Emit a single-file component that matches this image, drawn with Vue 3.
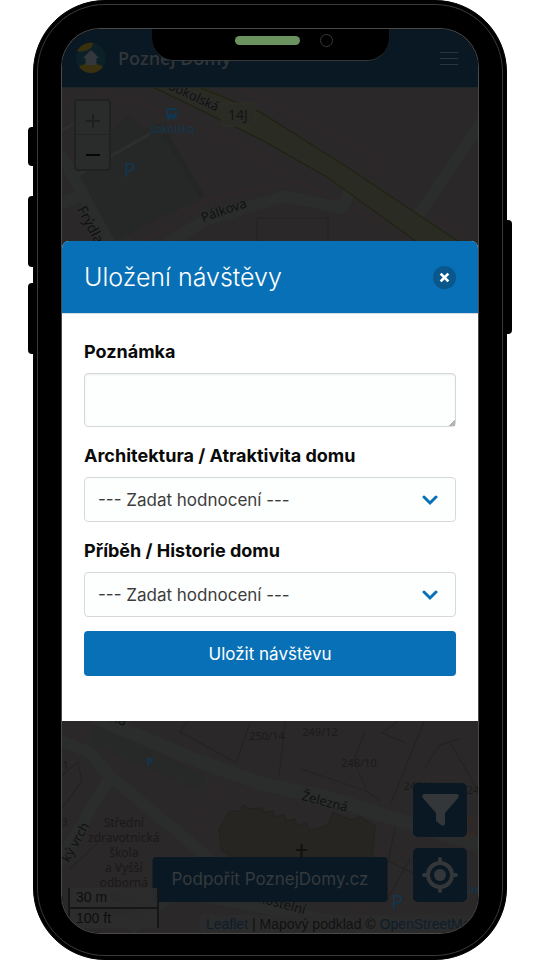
<template>
  <div class="stage">
    <div class="phone">
      <span class="side-key mute"></span>
      <span class="side-key volume-up"></span>
      <span class="side-key volume-down"></span>
      <span class="side-key power"></span>

      <div class="screen">
        <div class="app">
          <header class="app-header">
            <svg class="logo" viewBox="0 0 32 32" aria-hidden="true">
              <circle cx="16" cy="16" r="15" fill="#0c2027" />
              <path d="M2 9C6 2 13 0 18 1C18 7 10 11 2 9Z" fill="#39300f" />
              <path d="M4 25C9 20 22 20 28 25C22 33 10 33 4 25Z" fill="#39300f" />
              <path d="M16 8L24 16H21.500V23H10.500V16H8Z" fill="#34373b" />
            </svg>
            <span class="brand">Poznej Domy</span>
            <button class="menu-btn" type="button" aria-label="Menu">
              <span></span>
              <span></span>
              <span></span>
            </button>
          </header>

          <main class="map">
            <svg class="map-canvas" viewBox="62 88 416 844" preserveAspectRatio="xMidYMid slice" aria-hidden="true">
              <rect x="0" y="0" width="600" height="1000" fill="#2a2828" />

              <!-- parking and side streets -->
              <path d="M74 180L95 143L130 115L142 128L165 122L172 140L204 197L150 222L115 242L100 232Z" fill="#262828" />
              <path d="M62 130L74 124M72 178L150 134" class="lane" />
              <path d="M165 134L202 196" class="verge" />
              <path d="M60 152L110 244M60 205L80 195" class="road" />
              <path d="M160 248L205 220L262 203L285 196L342 208L350 190" class="road" />
              <path d="M417 217L484 118" class="road" />
              <path d="M257 240V218H328V240" class="plot" />

              <!-- Sokolská -->
              <path d="M153 86L200 86L260 112L347 167L462 244H420L327 177L260 139Z" fill="#2a2b22" />
              <path d="M196 86L260 112L347 167L462 244M153 87L260 139L327 177L420 244" class="main-edge" />

              <g class="footway">
                <path d="M93 88L150 107L200 127L270 162L329 198M350 205L405 238" />
                <path d="M238 86L300 117L385 158L372 178M146 240L200 203L240 191L300 181" />
                <path d="M432 212L465 240M219 778L193 842M389 823L380 857M366 898L360 914" />
              </g>

              <!-- plots in the lower part -->
              <path d="M62 775L78 761L82 780L68 800L62 806M70 868L98 842M188 720L180 731L236 762L250 722M286 716L279 775M365 730L354 760L366 788M401 718L382 732L405 742M300 768L366 790L380 800" class="plot" />
              <path d="M391 802L410 755L425 718M425 766L440 744L460 738M450 742L478 790M396 822L388 860L420 876M386 900L410 858" class="plot" />
              <path d="M95 725L205 775L207 793L90 742Z" fill="#272929" />

              <path d="M95 716L190 757L262 783L330 797L407 822L484 846" class="road wide" />
              <path d="M60 739L90 752L111 776L210 858" class="road" />
              <path d="M109 778L58 864" class="road" />
              <path d="M130 930L175 890L260 906L330 920L484 930" class="road" />

              <path
                d="M222 850L219 828L229 811L240 810L243 804L251 808L262 807L264 812L273 810L275 816L284 814L286 820L295 818L297 825L306 822L309 829L318 827L327 825L333 812L352 819L360 816L375 825L372 857L238 860L226 852Z"
                fill="#272521"
                stroke="#23221f"
              />

              <g class="street">
                <text x="168" y="89" class="tight" transform="rotate(25 168 89)">Sokolská</text>
                <text x="203" y="222" transform="rotate(-19 203 222)" class="tight">Pálkova</text>
                <text x="77" y="209" transform="rotate(62 77 209)">Frýdlantská</text>
                <text x="301" y="799" class="tight" transform="rotate(15 301 799)">Železná</text>
                <text x="69" y="862" class="tight" transform="rotate(-61 69 862)">ký vrch</text>
                <text x="258" y="901" class="tight" transform="rotate(15 258 901)">kostelní</text>
                <text x="96" y="715" transform="rotate(20 96 715)">ezná</text>
              </g>

              <rect x="222" y="103" width="33" height="23" rx="2" fill="#2a2b25" stroke="#303029" />
              <text x="238" y="120" class="road-no">14J</text>

              <g fill="#12364f">
                <path d="M168 108H176Q177 108 177 110V118H175V120H173V118H170V120H168V118H166V110Q166 108 168 108ZM168 110V114H175V110Z" fill-rule="evenodd" />
                <text x="172" y="133" class="stop">Sokolská</text>
                <text x="130" y="177" class="parking">P</text>
                <text x="150" y="765" class="parking small">P</text>
                <text x="397" y="908" class="parking">P</text>
                <text x="472" y="892" class="stop">rak</text>
              </g>
              <g fill="#3a2a1c">
                <text x="470" y="822" class="stop">al</text>
                <text x="470" y="835" class="stop">ja</text>
              </g>

              <g class="house-no">
                <text x="267" y="739">250/14</text>
                <text x="320" y="735">249/12</text>
                <text x="359" y="766">248/10</text>
                <text x="418" y="789">245/4</text>
                <text x="476" y="793">244</text>
                <text x="66" y="768">1</text>
                <text x="65" y="825">3</text>
              </g>

              <g class="school">
                <text x="124" y="826">Střední</text>
                <text x="124" y="841">zdravotnická</text>
                <text x="124" y="856">škola</text>
                <text x="124" y="871">a Vyšší</text>
                <text x="124" y="886">odborná</text>
                <text x="124" y="901">škola</text>
                <text x="124" y="916">zdravotnická</text>
              </g>

              <path d="M301.500 843V857M296 849H307" stroke="#111" stroke-width="2" />
            </svg>

            <div class="zoom-control">
              <button type="button" aria-label="Přiblížit" class="zoom-in"></button>
              <button type="button" aria-label="Oddálit" class="zoom-out"></button>
            </div>

            <div class="map-tools">
              <button type="button" aria-label="Filtr">
                <svg viewBox="0 0 54 54" aria-hidden="true">
                  <path d="M11 11H44Q47 12 45 15L32 30V41Q31 44 28 42L23 38V30L10 15Q8 12 11 11Z" fill="#343739" />
                </svg>
              </button>
              <button type="button" aria-label="Moje poloha">
                <svg viewBox="0 0 54 54" fill="none" stroke="#343739" aria-hidden="true">
                  <circle cx="27" cy="27" r="12" stroke-width="4" />
                  <circle cx="27" cy="27" r="6" fill="#343739" stroke="none" />
                  <path d="M27 11V15M27 39V43M11 27H15M39 27H43" stroke-width="4" stroke-linecap="round" />
                </svg>
              </button>
            </div>

            <a class="donate" href="#">Podpořit PoznejDomy.cz</a>

            <div class="scale">
              <span>30 m</span>
              <span>100 ft</span>
            </div>

            <div class="attribution">
              <a href="#">Leaflet</a> | Mapový podklad © <a href="#">OpenStreetMap</a>
            </div>
          </main>
        </div>

        <section class="modal" role="dialog" aria-labelledby="modal-title">
          <div class="modal-header">
            <h1 id="modal-title">Uložení návštěvy</h1>
            <button class="close-btn" type="button" aria-label="Zavřít">
              <svg viewBox="0 0 10 10" aria-hidden="true">
                <path d="M1.500 1.500L8.500 8.500M8.500 1.500L1.500 8.500" stroke="#fff" stroke-width="2.500" />
              </svg>
            </button>
          </div>
          <form class="modal-body" @submit.prevent>
            <div class="field">
              <label for="note">Poznámka</label>
              <textarea id="note" v-model="note"></textarea>
            </div>
            <div v-for="item in ratings" :key="item.id" class="field">
              <label :for="item.id">{{ item.label }}</label>
              <div class="select-wrap">
                <select :id="item.id" v-model="item.value">
                  <option value="">--- Zadat hodnocení ---</option>
                  <option v-for="n in 5" :key="n" :value="n">{{ n }}</option>
                </select>
                <svg class="chevron" viewBox="0 0 16 12" aria-hidden="true">
                  <path d="M2 3L8 9L14 3" fill="none" stroke="#0870b6" stroke-width="3" stroke-linecap="round" />
                </svg>
              </div>
            </div>
            <button class="submit-btn" type="submit">Uložit návštěvu</button>
          </form>
        </section>

        <div class="notch">
          <span class="speaker"></span>
          <span class="camera"></span>
        </div>
      </div>
    </div>
  </div>
</template>

<script setup>
import { reactive, ref } from 'vue'

const note = ref('')

const ratings = reactive([
  { id: 'architecture', label: 'Architektura / Atraktivita domu', value: '' },
  { id: 'story', label: 'Příběh / Historie domu', value: '' },
])
</script>

<style>
body {
  background: #fff;
}
</style>

<style scoped>
.stage {
  min-height: 100vh;
  display: flex;
  padding: 0 33px;
  box-sizing: border-box;
  font-family: Inter, "Liberation Sans", sans-serif;
}

button,
select,
textarea {
  font: inherit;
}

.phone {
  position: relative;
  flex: 1;
  display: flex;
  min-width: 0;
  padding: 28px 28px 26px;
  border: 1px solid #000;
  border-radius: 72px;
  background: #000;
}

.phone::before {
  content: "";
  position: absolute;
  inset: 3px;
  border: 1px solid #3a3a3a;
  border-radius: 68px;
}

.side-key {
  position: absolute;
  left: -6px;
  width: 6px;
  background: #000;
  border-radius: 4px 0 0 4px;
}

.mute {
  top: 126px;
  height: 39px;
}

.volume-up {
  top: 195px;
  height: 71px;
}

.volume-down {
  top: 282px;
  height: 71px;
}

.power {
  top: 219px;
  left: auto;
  right: -6px;
  height: 114px;
  border-radius: 0 4px 4px 0;
}

.screen {
  position: relative;
  flex: 1;
  min-width: 0;
  display: grid;
  grid-template-columns: minmax(0, 1fr);
  border-radius: 38px;
  overflow: hidden;
  box-shadow: 0 0 0 1px #4a4a4a;
}

.app,
.modal,
.notch {
  grid-area: 1 / 1;
}

.app {
  display: flex;
  flex-direction: column;
}

.app-header {
  display: flex;
  align-items: center;
  gap: 11px;
  height: 58px;
  padding: 0 20px 0 13px;
  background: #0a1823;
  border-bottom: 1px solid #20272b;
}

.logo {
  width: 32px;
  height: 32px;
}

.brand {
  flex: 1;
  font-family: "Open Sans", sans-serif;
  font-size: 18px;
  font-weight: 600;
  color: #303538;
}

.menu-btn {
  display: flex;
  flex-direction: column;
  gap: 5px;
  padding: 0;
  border: 0;
  background: none;
}

.menu-btn span {
  width: 18px;
  height: 1px;
  background: #2c3439;
}

.map {
  position: relative;
  flex: 1;
  overflow: hidden;
}

.map-canvas {
  position: absolute;
  width: 100%;
  height: 100%;
  font-family: "Noto Sans", sans-serif;
}

.road {
  fill: none;
  stroke: #2a2d2c;
  stroke-width: 12px;
  stroke-linejoin: round;
}

.road.wide {
  stroke-width: 14px;
}

.lane {
  fill: none;
  stroke: #2d2f2f;
  stroke-width: 3px;
}

.verge {
  stroke: #242626;
  stroke-width: 5px;
}

.plot {
  fill: none;
  stroke: #242322;
  stroke-width: 1px;
}

.main-edge {
  fill: none;
  stroke: #20220f;
  stroke-width: 1px;
}

.footway {
  fill: none;
  stroke: #3a2226;
  stroke-width: 1px;
  stroke-dasharray: 3 3;
}

.street {
  font-size: 14px;
  fill: #101111;
  stroke: #2b2c2b;
  stroke-width: 2px;
  paint-order: stroke;
}

.street .tight {
  font-size: 13px;
}

.road-no {
  font-size: 14px;
  text-anchor: middle;
  fill: #141414;
}

.stop {
  font-size: 11px;
  text-anchor: middle;
}

.parking {
  font-size: 19px;
  text-anchor: middle;
}

.parking.small {
  font-size: 11px;
  font-weight: 700;
}

.house-no {
  font-size: 11px;
  text-anchor: middle;
  fill: #1c1b1b;
}

.school {
  font-size: 12px;
  text-anchor: middle;
  fill: #1b1919;
}

.zoom-control {
  position: absolute;
  top: 11px;
  left: 12px;
  border: 2px solid #202222;
  border-radius: 4px;
  overflow: hidden;
}

.zoom-control button {
  position: relative;
  display: block;
  width: 33px;
  height: 34px;
  padding: 0;
  border: 0;
  background: #2a2b2b;
}

.zoom-control .zoom-in {
  border-bottom: 1px solid #222424;
}

.zoom-in::before,
.zoom-in::after,
.zoom-out::before {
  content: "";
  position: absolute;
  top: 19px;
  left: 10px;
  width: 14px;
  height: 2px;
  background: #1e2020;
}

.zoom-in::after {
  transform: rotate(90deg);
}

.zoom-out::before {
  background: #060606;
}

.map-tools {
  position: absolute;
  right: 11px;
  bottom: 31px;
  display: flex;
  flex-direction: column;
  gap: 11px;
}

.map-tools button {
  width: 54px;
  height: 54px;
  padding: 0;
  border: 0;
  border-radius: 5px;
  background: #0a1823;
}

.map-tools svg {
  display: block;
}

.donate {
  position: absolute;
  left: 50%;
  bottom: 31px;
  transform: translateX(-50%);
  padding: 0 19px;
  border-radius: 4px;
  background: #0a1823;
  color: #343a3e;
  font-size: 17px;
  line-height: 45px;
  white-space: nowrap;
  text-decoration: none;
}

.scale {
  position: absolute;
  left: 6px;
  bottom: 5px;
  width: 91px;
  font-family: "Liberation Sans", sans-serif;
  font-size: 14px;
  line-height: 19px;
  color: #0e0e0e;
}

.scale span {
  display: block;
  padding-left: 6px;
  border: solid #161616;
  border-width: 0 2px 2px;
  background: rgba(44, 44, 44, 0.9);
}

.scale span:last-child {
  border-bottom: 0;
}

.attribution {
  position: absolute;
  left: 138px;
  right: 0;
  bottom: 0;
  padding-left: 6px;
  overflow: hidden;
  background: #2b2b2b;
  color: #111;
  font-family: "Liberation Sans", sans-serif;
  font-size: 14px;
  line-height: 18px;
  white-space: nowrap;
}

.attribution a {
  color: #0c1e2b;
  text-decoration: none;
}

.modal {
  position: relative;
  align-self: center;
  border-radius: 7px 7px 0 0;
  overflow: hidden;
  background: #fff;
}

.modal-header {
  display: flex;
  align-items: center;
  justify-content: space-between;
  height: 73px;
  padding: 0 22px;
  box-sizing: border-box;
  background: #0870b6;
  border-bottom: 1px solid #d5dde2;
}

.modal-header h1 {
  margin: 0;
  font-size: 25px;
  font-weight: 300;
  line-height: 32px;
  color: #fff;
}

.close-btn {
  display: flex;
  align-items: center;
  justify-content: center;
  width: 23px;
  height: 23px;
  padding: 0;
  border: 0;
  border-radius: 50%;
  background: #0a578c;
}

.close-btn svg {
  width: 11px;
  height: 11px;
}

.modal-body {
  padding: 25px 22px 45px;
}

.field {
  margin-bottom: 16px;
}

.field label {
  display: block;
  margin-bottom: 9px;
  font-size: 18px;
  font-weight: 700;
  line-height: 25px;
  color: #0a0a0a;
}

.field textarea {
  display: block;
  width: 100%;
  height: 54px;
  padding: 8px 13px;
  box-sizing: border-box;
  border: 1px solid #d6d9da;
  border-radius: 4px;
  background: #fdfefe;
  box-shadow: inset 0 1px 2px rgba(0, 0, 0, 0.08);
  font-size: 17px;
  resize: vertical;
}

.field textarea::-webkit-resizer {
  background: linear-gradient(135deg, transparent 78%, #b4b4b4 78%);
}

.select-wrap {
  position: relative;
}

.field select {
  display: block;
  width: 100%;
  height: 45px;
  padding: 0 40px 0 13px;
  border: 1px solid #d6d9da;
  border-radius: 4px;
  background: #fdfefe;
  color: #3c3c3c;
  font-size: 17px;
  appearance: none;
}

.chevron {
  position: absolute;
  top: 17px;
  right: 18px;
  width: 16px;
  height: 12px;
  pointer-events: none;
}

.submit-btn {
  display: block;
  width: 100%;
  height: 45px;
  margin-top: -2px;
  border: 0;
  border-radius: 4px;
  background: #0870b6;
  color: #fff;
  font-size: 17px;
}

.notch {
  position: relative;
  justify-self: center;
  align-self: start;
  display: flex;
  justify-content: flex-end;
  align-items: center;
  gap: 20px;
  width: 237px;
  height: 32px;
  padding: 0 56px 8px 0;
  box-sizing: border-box;
  border-bottom: 1px solid #33383b;
  border-radius: 0 0 22px 22px;
  background: #000;
}

.speaker {
  width: 65px;
  height: 9px;
  border-radius: 5px;
  background: #6b935f;
}

.camera {
  width: 11px;
  height: 11px;
  border: 1px solid #3a3a3a;
  border-radius: 50%;
}
</style>
